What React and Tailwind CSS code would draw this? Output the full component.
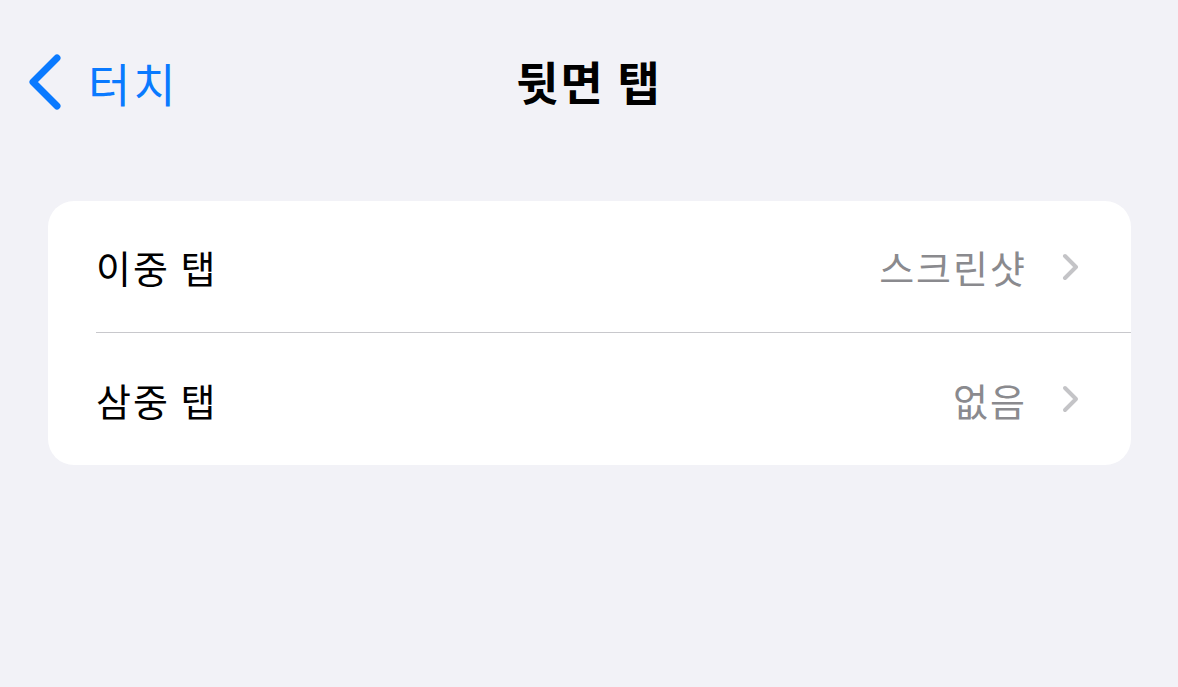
const font = { fontFamily: '"Noto Sans CJK KR", "Noto Sans", sans-serif' };

function Chevron() {
  return (
    <svg width="20" height="28" viewBox="0 0 20 28" fill="none">
      <path d="M4 3 L15 14 L4 25" stroke="#c4c4c7" strokeWidth="4" strokeLinecap="round" strokeLinejoin="round" />
    </svg>
  );
}

function Row({ label, value, last }) {
  return (
    <div className="flex h-[132px] items-center pl-[48px]">
      <div className={`flex h-full flex-1 items-center pr-[50px] ${last ? "" : "border-b border-[#c8c8cc]"}`}>
        <span className="flex-1 text-[38px] tracking-[2px] text-black">{label}</span>
        <span className="mr-[34px] text-[38px] tracking-[2px] text-[#8a8a8e]">{value}</span>
        <Chevron />
      </div>
    </div>
  );
}

export default function App() {
  return (
    <div className="min-h-[687px] w-full bg-[#f2f2f7]" style={font}>
      <div className="relative flex h-[164px] items-center justify-center pb-[4px]">
        <div className="absolute left-[26px] top-[53px] flex items-center gap-[24px] text-[#0a7aff]">
          <svg width="38" height="58" viewBox="0 0 38 58" fill="none">
            <path d="M31 5 L7 29 L31 53" stroke="#0a7aff" strokeWidth="7" strokeLinecap="round" strokeLinejoin="round" />
          </svg>
          <span className="text-[46px] leading-none tracking-[3px]">터치</span>
        </div>
        <h1 className="text-[46px] font-bold leading-none tracking-[2px] text-black">뒷면 탭</h1>
      </div>
      <div className="mx-[48px] mt-[37px] w-[1083px] overflow-hidden rounded-[26px] bg-white">
        <Row label="이중 탭" value="스크린샷" />
        <Row label="삼중 탭" value="없음" last />
      </div>
    </div>
  );
}
